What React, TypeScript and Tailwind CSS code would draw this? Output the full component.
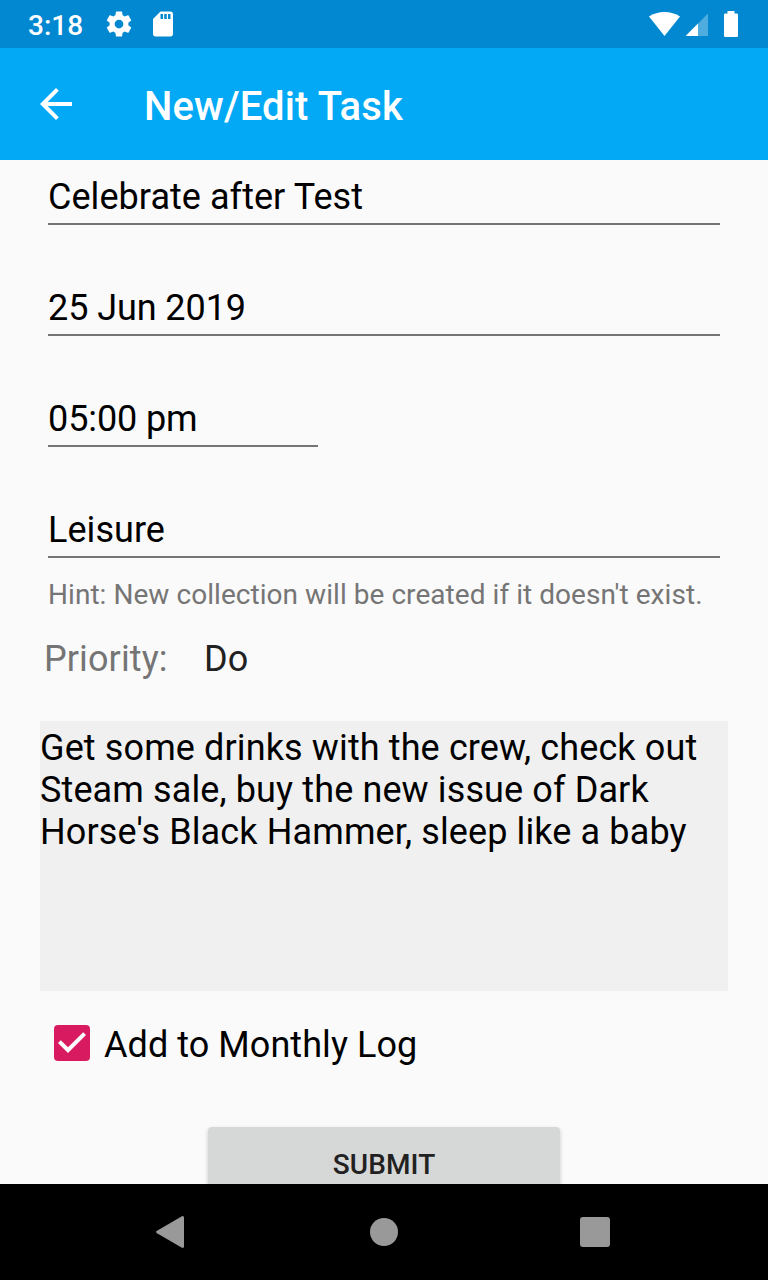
import React from "react";

function Field({ value, className = "" }: { value: string; className?: string }) {
  return (
    <div className={`mb-[51px] flex h-[60px] flex-col justify-end border-b-2 border-[#757575] pb-[5px] text-[36px] leading-[42px] ${className}`}>
      <span className="whitespace-pre">{value}</span>
    </div>
  );
}

export default function App() {
  return (
    <div className="flex h-[1280px] w-[768px] flex-col overflow-hidden bg-[#fafafa] font-['Roboto',sans-serif] text-black">
      <header className="shrink-0">
        <div className="flex h-12 items-center bg-[#0288d1] pl-7 pr-[30px] text-white">
          <span className="w-[76px] pt-[3px] text-[28px] font-medium leading-8">3:18</span>
          <svg className="h-[30px] w-[30px]" viewBox="0 0 24 24" fill="currentColor">
            <path d="M19.43 12.98c.04-.32.07-.64.07-.98s-.03-.66-.07-.98l2.11-1.65c.19-.15.24-.42.12-.64l-2-3.46c-.12-.22-.39-.3-.61-.22l-2.49 1c-.52-.4-1.08-.73-1.69-.98l-.38-2.65C14.46 2.18 14.25 2 14 2h-4c-.25 0-.46.18-.49.42l-.38 2.65c-.61.25-1.17.59-1.69.98l-2.49-1c-.23-.09-.49 0-.61.22l-2 3.46c-.13.22-.07.49.12.64l2.11 1.65c-.04.32-.07.65-.07.98s.03.66.07.98l-2.11 1.65c-.19.15-.24.42-.12.64l2 3.46c.12.22.39.3.61.22l2.49-1c.52.4 1.08.73 1.69.98l.38 2.65c.03.24.24.42.49.42h4c.25 0 .46-.18.49-.42l.38-2.65c.61-.25 1.17-.59 1.69-.98l2.49 1c.23.09.49 0 .61-.22l2-3.46c.12-.22.07-.49-.12-.64l-2.11-1.65zM12 15.5c-1.93 0-3.5-1.57-3.5-3.5s1.57-3.5 3.5-3.5 3.5 1.57 3.5 3.5-1.57 3.5-3.5 3.5z" />
          </svg>
          <svg className="ml-[14px] h-[30px] w-[30px]" viewBox="0 0 24 24" fill="currentColor">
            <path d="M18 2h-8L4.02 8 4 20c0 1.1.9 2 2 2h12c1.1 0 2-.9 2-2V4c0-1.1-.9-2-2-2zm-6 6h-2V4h2v4zm3 0h-2V4h2v4zm3 0h-2V4h2v4z" />
          </svg>
          <svg className="ml-auto h-6 w-[31px]" viewBox="0 0 31 24" fill="currentColor">
            <path d="M0 4.6C4.3 1.5 9.8 0 15.5 0S26.7 1.5 31 4.6L15.5 24Z" />
          </svg>
          <svg className="ml-[6px] h-[23px] w-[22px]" viewBox="0 0 22 23" fill="currentColor">
            <path opacity=".3" d="M12 10.5 22 .5V23H12Z" />
            <path d="M0 23V22.5L12 10.5V23Z" />
          </svg>
          <svg className="ml-4 h-[26px] w-[14px]" viewBox="0 0 14 26" fill="currentColor">
            <path d="M3.5 0h7v2.5h2.3a1.2 1.2 0 0 1 1.2 1.2v21.1a1.2 1.2 0 0 1-1.2 1.2H1.2A1.2 1.2 0 0 1 0 24.8V3.7a1.2 1.2 0 0 1 1.2-1.2h2.3Z" />
          </svg>
        </div>
        <div className="flex h-28 items-center bg-[#03a9f4] pl-8 text-white">
          <svg className="h-12 w-12" viewBox="0 0 24 24" fill="currentColor">
            <path d="M20 11H7.83l5.59-5.59L12 4l-8 8 8 8 1.41-1.41L7.83 13H20v-2z" />
          </svg>
          <h1 className="ml-16 pt-[6px] text-[40px] font-medium leading-[48px] tracking-[0.14px]">New/Edit Task</h1>
        </div>
      </header>

      <main className="min-h-0 flex-1 overflow-hidden px-10 pt-[5px]">
        <div className="px-2">
          <Field value="Celebrate after Test" className="tracking-[0.05px]" />
          <Field value="25 Jun 2019" className="tracking-[-0.08px]" />
          <Field value="05:00 pm" className="w-[270px] tracking-[-0.1px]" />
          <Field value="Leisure" className="mb-[20px]! tracking-[0.05px]" />
          <p className="whitespace-nowrap text-[28px] leading-[33px] tracking-[0.05px] text-[#757575]">Hint: New collection will be created if it doesn't exist.</p>
        </div>
        <div className="mt-[27px] flex pl-1 text-[36px] leading-[42px]">
          <span className="w-40 tracking-[0.1px] text-[#757575]">Priority:</span>
          <span className="text-[#212121]">Do</span>
        </div>
        <div className="mt-[41px] h-[270px] bg-[#f0f0f0] pt-[6px] text-[36px] leading-[42px] tracking-[0.12px]">
          <p className="whitespace-nowrap">Get some drinks with the crew, check out<br />Steam sale, buy the new issue of Dark<br />Horse's Black Hammer, sleep like a baby</p>
        </div>
        <div className="mt-[28px] flex h-12 items-center pl-2">
          <svg className="h-12 w-12" viewBox="0 0 24 24">
            <rect x="3" y="3" width="18" height="18" rx="2" fill="#d81b60" />
            <path d="M10 17l-5-5 1.41-1.41L10 14.17l7.59-7.59L19 8z" fill="#fafafa" />
          </svg>
          <span className="ml-2 pt-1 text-[36px] leading-[42px] tracking-[0.06px]">Add to Monthly Log</span>
        </div>
        <div className="mx-auto mt-[60px] flex h-[72px] w-[352px] justify-center rounded-[4px] bg-[#d6d7d7] pt-[21px] text-[28px] font-medium leading-[33px] tracking-[0.1px] text-[#212121] shadow-[0_2px_4px_rgba(0,0,0,0.2)]">SUBMIT</div>
      </main>

      <nav className="flex h-24 shrink-0 items-center bg-black text-[#999999]">
        <svg className="ml-[155px] h-8 w-[30px]" viewBox="0 0 30 32" fill="currentColor">
          <path d="M26.5.4Q29-.6 29 1.8V30.2Q29 32.6 26.5 31.6L2 17.2Q0 16 2 14.8Z" />
        </svg>
        <div className="ml-[185px] h-7 w-7 rounded-full bg-[#999999]" />
        <div className="ml-[182px] h-[30px] w-[30px] rounded-[3px] bg-[#999999]" />
      </nav>
    </div>
  );
}
